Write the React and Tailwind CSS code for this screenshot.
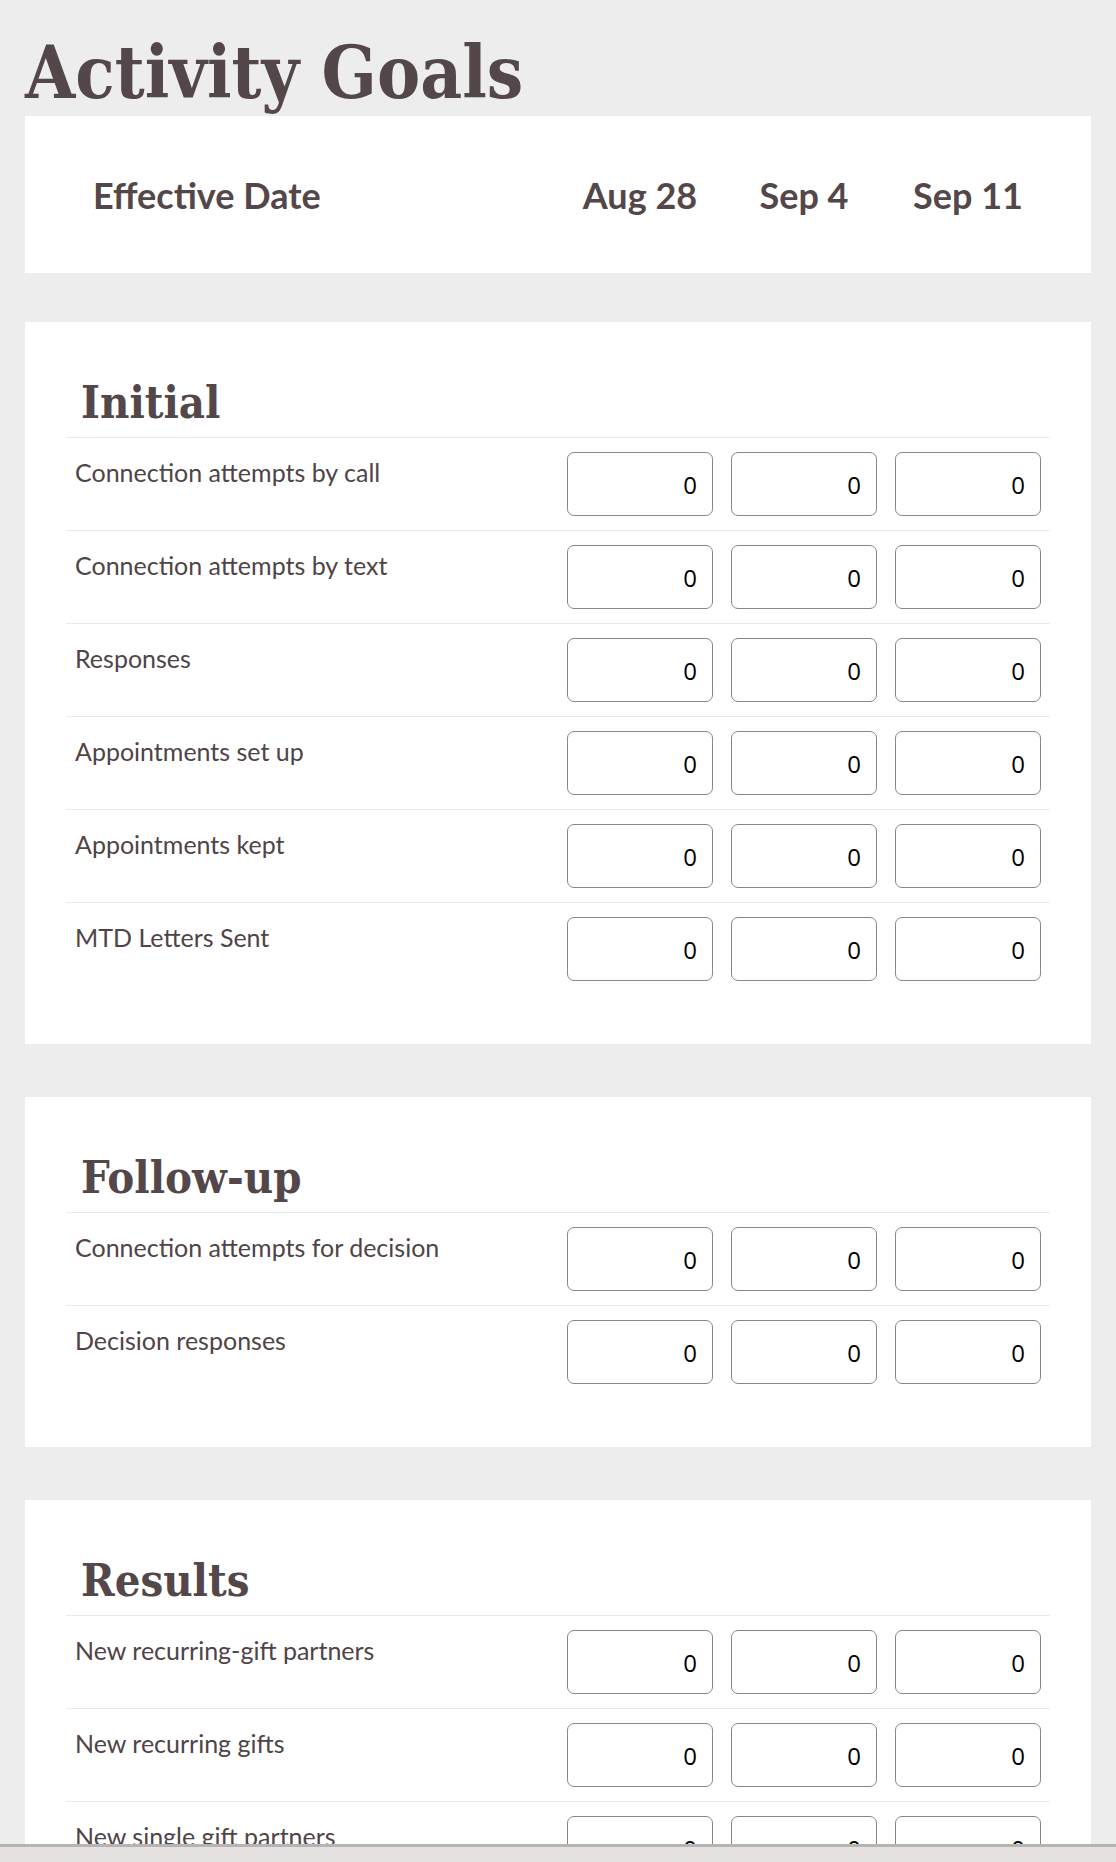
import React from "react";

const dates = ["Aug 28", "Sep 4", "Sep 11"];

const sections = [
  {
    title: "Initial",
    rows: [
      "Connection attempts by call",
      "Connection attempts by text",
      "Responses",
      "Appointments set up",
      "Appointments kept",
      "MTD Letters Sent",
    ],
  },
  {
    title: "Follow-up",
    rows: ["Connection attempts for decision", "Decision responses"],
  },
  {
    title: "Results",
    rows: [
      "New recurring-gift partners",
      "New recurring gifts",
      "New single gift partners",
      "New single gifts",
    ],
  },
];

function GoalRow({ label }) {
  return (
    <div className="flex border-t border-[#e9e9e9] px-[9px] py-[14px]">
      <div className="mt-[2px] flex-1 font-['Lato','Liberation_Sans',sans-serif] text-[25px] leading-normal text-[#4f4447]">
        {label}
      </div>
      <div className="flex gap-[18px]">
        {dates.map((d) => (
          <input
            key={d}
            type="text"
            defaultValue="0"
            className="h-[64px] w-[146px] rounded-[7px] border border-[#8b8585] bg-white pr-[15px] text-right font-['Open_Sans','Liberation_Sans',sans-serif] text-[24px] text-black outline-none"
          />
        ))}
      </div>
    </div>
  );
}

function Section({ title, rows }) {
  return (
    <div className="bg-white px-[41px] pt-[58px] pb-[49px]">
      <h2 className="mb-[12px] pl-[15px] font-['DejaVu_Serif_Condensed','DejaVu_Serif',serif] text-[45px] font-bold leading-none text-[#53474a]">
        {title}
      </h2>
      {rows.map((r) => (
        <GoalRow key={r} label={r} />
      ))}
    </div>
  );
}

export default function App() {
  return (
    <div className="relative h-[1862px] overflow-hidden bg-[#ededed] px-[25px] pt-[37px]">
      <h1 className="mb-[7px] font-['DejaVu_Serif_Condensed','DejaVu_Serif',serif] text-[72px] font-bold leading-none text-[#53474a]">
        Activity Goals
      </h1>

      <div className="flex h-[157px] items-center bg-white pl-[68px] pr-[50px]">
        <div className="flex-1 font-['Lato','Liberation_Sans',sans-serif] text-[36px] font-bold text-[#53474a]">
          Effective Date
        </div>
        <div className="flex gap-[18px]">
          {dates.map((d) => (
            <div
              key={d}
              className="w-[146px] text-center font-['Lato','Liberation_Sans',sans-serif] text-[36px] font-bold text-[#53474a]"
            >
              {d}
            </div>
          ))}
        </div>
      </div>

      <div className="mt-[49px] flex flex-col gap-[53px]">
        {sections.map((s) => (
          <Section key={s.title} title={s.title} rows={s.rows} />
        ))}
      </div>

      <div className="fixed bottom-0 left-0 right-0 h-[18px] border-t-[3px] border-[#b7b5b4] bg-[#e4e1e0]" />
    </div>
  );
}
